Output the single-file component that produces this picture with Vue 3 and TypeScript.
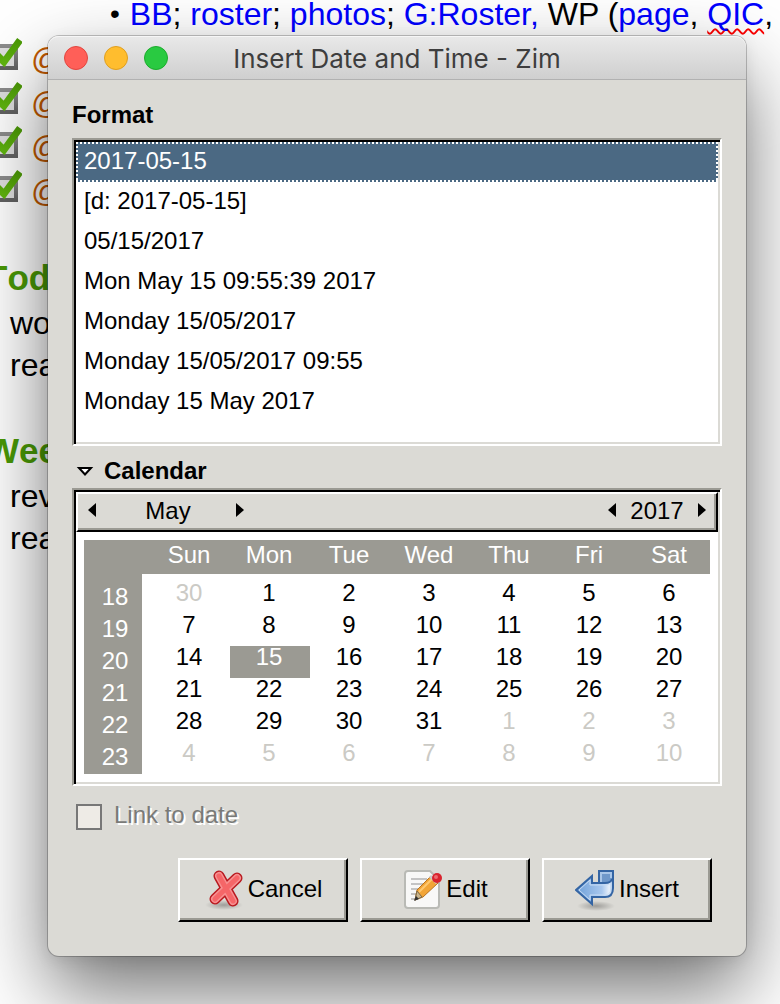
<script setup lang="ts">
import { computed, ref } from 'vue'

interface Day {
  n: number
  other: boolean
}

const formats: string[] = [
  '2017-05-15',
  '[d: 2017-05-15]',
  '05/15/2017',
  'Mon May 15 09:55:39 2017',
  'Monday 15/05/2017',
  'Monday 15/05/2017 09:55',
  'Monday 15 May 2017',
]
const weekdays: string[] = ['Sun', 'Mon', 'Tue', 'Wed', 'Thu', 'Fri', 'Sat']

const selectedFormat = ref(0)
const selectedDay = ref(15)
const open = ref(true)

const weeks = computed(() =>
  Array.from({ length: 6 }, (_, w) => ({
    number: 18 + w,
    days: Array.from({ length: 7 }, (_, d): Day => {
      const i = w * 7 + d
      if (i === 0) return { n: 30, other: true }
      return i > 31 ? { n: i - 31, other: true } : { n: i, other: false }
    }),
  })),
)

function pick(day: Day) {
  if (!day.other) selectedDay.value = day.n
}
</script>

<template>
  <div class="desktop">
    <article class="note">
      <p class="top-line">
        <span class="bullet">•</span>
        <span><a href="#">BB</a>; <a href="#">roster</a>; <a href="#">photos</a>; <a href="#">G:Roster,</a> WP (<a href="#">page</a>, <a href="#" class="misspelt">QIC</a>,</span>
      </p>
      <ul class="tasks">
        <li v-for="i in 4" :key="i">
          <svg width="34" height="36" viewBox="0 0 34 36" aria-hidden="true">
            <defs>
              <linearGradient id="box-edge" x2="0" y2="1">
                <stop offset="0" stop-color="#8c8c8c" />
                <stop offset="1" stop-color="#626262" />
              </linearGradient>
              <linearGradient id="tick-fill" x2="0" y2="1">
                <stop offset="0" stop-color="#4c9a06" />
                <stop offset="1" stop-color="#5fb40f" />
              </linearGradient>
            </defs>
            <rect x="6" y="9" width="22" height="22" fill="#dedede" stroke="url(#box-edge)" stroke-width="4" />
            <path d="M7 16 L16 25 L32 3" fill="none" stroke="url(#tick-fill)" stroke-width="7" />
          </svg>
          <span>@</span>
        </li>
      </ul>
      <h2>Tod</h2>
      <p class="line">wo</p>
      <p class="line">rea</p>
      <h2>Wee</h2>
      <p class="line">rev</p>
      <p class="line">rea</p>
    </article>

    <section class="dialog" role="dialog" aria-labelledby="dialog-title">
      <header class="titlebar">
        <div class="lights">
          <button type="button" class="light close" aria-label="Close"></button>
          <button type="button" class="light minimise" aria-label="Minimise"></button>
          <button type="button" class="light zoom" aria-label="Zoom"></button>
        </div>
        <h1 id="dialog-title">Insert Date and Time - Zim</h1>
      </header>

      <div class="body">
        <h3 id="format-label" class="label">Format</h3>
        <div class="frame formats" role="listbox" aria-labelledby="format-label">
          <button
            v-for="(f, i) in formats"
            :key="f"
            type="button"
            role="option"
            class="format"
            :class="{ selected: i === selectedFormat }"
            :aria-selected="i === selectedFormat"
            @click="selectedFormat = i"
          >{{ f }}</button>
        </div>

        <button type="button" class="expander" :aria-expanded="open" @click="open = !open">
          <svg width="18" height="14" viewBox="0 0 18 14" aria-hidden="true">
            <path d="M3 4 H15 L9 10.500 Z" fill="#fff" stroke="#000" stroke-width="2" />
          </svg>
          Calendar
        </button>

        <div v-if="open" class="frame">
          <div class="nav">
            <button type="button" class="arrow" aria-label="Previous month">
              <svg width="8" height="14" viewBox="0 0 8 14"><path d="M8 0 V14 L0 7 Z" /></svg>
            </button>
            <span class="month">May</span>
            <button type="button" class="arrow" aria-label="Next month">
              <svg width="8" height="14" viewBox="0 0 8 14"><path d="M0 0 V14 L8 7 Z" /></svg>
            </button>
            <span class="spring"></span>
            <button type="button" class="arrow" aria-label="Previous year">
              <svg width="8" height="14" viewBox="0 0 8 14"><path d="M8 0 V14 L0 7 Z" /></svg>
            </button>
            <span class="year">2017</span>
            <button type="button" class="arrow" aria-label="Next year">
              <svg width="8" height="14" viewBox="0 0 8 14"><path d="M0 0 V14 L8 7 Z" /></svg>
            </button>
          </div>
          <div class="month-grid">
            <table>
              <thead>
                <tr>
                  <td class="corner"></td>
                  <th v-for="d in weekdays" :key="d" scope="col">{{ d }}</th>
                </tr>
              </thead>
              <tbody>
                <tr v-for="w in weeks" :key="w.number">
                  <th scope="row">{{ w.number }}</th>
                  <td v-for="(day, i) in w.days" :key="i">
                    <button
                      type="button"
                      class="day"
                      :class="{ other: day.other, chosen: !day.other && day.n === selectedDay }"
                      @click="pick(day)"
                    >{{ day.n }}</button>
                  </td>
                </tr>
              </tbody>
            </table>
          </div>
        </div>

        <label class="link-row">
          <input type="checkbox" disabled />
          <span>Link to date</span>
        </label>

        <footer class="actions">
          <button type="button" class="action">
            <svg width="40" height="44" viewBox="0 0 40 44" aria-hidden="true">
              <defs>
                <radialGradient id="soft">
                  <stop offset="0" stop-color="#000" stop-opacity=".28" />
                  <stop offset="1" stop-color="#000" stop-opacity="0" />
                </radialGradient>
              </defs>
              <ellipse cx="20" cy="38" rx="19" ry="5" fill="url(#soft)" />
              <g fill="none" stroke-linecap="round" stroke-linejoin="round">
                <path d="M15 9 L29 34 M33 11 L11 32" stroke="#b8191f" stroke-width="11" />
                <path d="M15 9 L29 34 M33 11 L11 32" stroke="#f78f90" stroke-width="8" />
                <path d="M15 9 L29 34 M33 11 L11 32" stroke="#f56668" stroke-width="5" />
              </g>
            </svg>
            Cancel
          </button>
          <button type="button" class="action">
            <svg width="40" height="44" viewBox="0 0 40 44" aria-hidden="true">
              <path d="M6 4 H28 L37 13 V38 Q37 41 34 41 H6 Q3 41 3 38 V7 Q3 4 6 4 Z" fill="#f8f8f7" stroke="#b9bab5" stroke-width="2" />
              <path d="M9 12 H25 M9 17 H22 M9 22 H20 M9 27 H17 M9 32 H14" stroke="#c4c4c4" stroke-width="2" />
              <path d="M29 9 L36 16 L21 30 L13 33 L15 23 Z" fill="#f2a537" stroke="#b97320" stroke-width="1" />
              <path d="M30 12 L17 25" stroke="#ffc970" stroke-width="2" />
              <path d="M15 24 L20 30 L13 33 Z" fill="#c9b48c" stroke="#7c6a48" stroke-width="1" />
              <path d="M14 29 L17 32 L12 34 Z" fill="#333" />
              <path d="M28 9 L35 16" stroke="#c9c9c9" stroke-width="3" />
              <circle cx="35" cy="11" r="5" fill="#d9232e" />
              <circle cx="34" cy="10" r="2" fill="#ee6a70" />
            </svg>
            Edit
          </button>
          <button type="button" class="action">
            <svg width="40" height="44" viewBox="0 0 40 44" aria-hidden="true">
              <defs>
                <linearGradient id="ret" x1="0" x2="1">
                  <stop offset="0" stop-color="#6d9fd8" />
                  <stop offset=".7" stop-color="#a9c8ee" />
                  <stop offset=".9" stop-color="#e8f0fa" />
                  <stop offset="1" stop-color="#8fb4e0" />
                </linearGradient>
              </defs>
              <ellipse cx="21" cy="39" rx="19" ry="5" fill="url(#soft)" />
              <path d="M24 4 H38 V21 Q38 30 30 30 H17 V37 L1 23 L17 9 V16 H24 Z" fill="url(#ret)" stroke="#3465a4" stroke-width="2" />
              <path d="M25 5 H37 V13 Q34 16 30 16 H25 Z" fill="#6f98ca" />
              <path d="M24 16 H30 Q36 16 37 12" fill="none" stroke="#3465a4" stroke-width="2" />
              <path d="M26 15 V6 H36 V11" fill="none" stroke="#a9c6e8" stroke-width="2" />
              <path d="M15 13 V18 H30 Q34 18 36 16 V21 Q36 28 30 28 H15 V33 L4 23 Z" fill="none" stroke="#c8dcf4" stroke-width="1" />
            </svg>
            Insert
          </button>
        </footer>
      </div>
    </section>
  </div>
</template>

<style>
body {
  margin: 0;
  background: #fff;
}
</style>

<style scoped>
* {
  box-sizing: border-box;
}

.desktop {
  display: grid;
  min-height: 100vh;
  overflow: hidden;
  align-items: start;
  font-family: "Liberation Sans", Arial, sans-serif;
  color: #000;
}

.note,
.dialog {
  grid-area: 1 / 1;
  min-width: 0;
}

button {
  margin: 0;
  padding: 0;
  border: 0;
  background: none;
  font: inherit;
  color: inherit;
}

/* Page behind the dialog */
.note {
  margin-left: -14px;
  font-size: 32px;
  white-space: nowrap;
}

.note p,
.note h2,
.tasks {
  margin: 0;
  padding: 0;
}

.note a {
  color: #00f;
  text-decoration: none;
}

.note .top-line {
  display: flex;
  gap: 10px;
  padding-left: 124px;
  line-height: 28px;
}

.bullet {
  font-size: 28px;
}

.note .misspelt {
  text-decoration: underline wavy #f00 2px;
  text-underline-offset: 3px;
  text-decoration-skip-ink: none;
}

.note .tasks {
  margin-top: 9px;
  padding-left: 2px;
  list-style: none;
  line-height: 44px;
  color: #c25a00;
}

.tasks li {
  display: flex;
  align-items: flex-start;
  gap: 9px;
}

.note h2 {
  margin: 43px 0 2px;
  font-size: 35px;
  line-height: 44px;
  font-kerning: none;
  color: #4a9a06;
}

.note .line {
  padding-left: 24px;
  line-height: 42px;
}

/* Window */
.dialog {
  position: relative;
  margin: 36px 34px 48px 48px;
  border-radius: 11px;
  background: #dbdad5;
  font-size: 24px;
  box-shadow:
    0 0 0 1px rgba(0, 0, 0, 0.22),
    0 4px 16px rgba(0, 0, 0, 0.08),
    0 36px 80px rgba(0, 0, 0, 0.55);
}

.titlebar {
  display: grid;
  grid-template-columns: 1fr auto 1fr;
  align-items: center;
  height: 44px;
  padding: 0 16px;
  border-bottom: 1px solid #b1b1b1;
  border-radius: 11px 11px 0 0;
  background: linear-gradient(#e9e9e9, #cfcfcf);
  box-shadow: inset 0 1px #f6f6f6;
}

.titlebar h1 {
  margin: 0;
  padding-top: 2px;
  font: 400 26px/32px Inter, sans-serif;
  color: #3e3e3e;
}

.lights {
  display: flex;
  gap: 16px;
}

.light {
  width: 24px;
  height: 24px;
  border-radius: 50%;
  border: 1px solid;
}

.close {
  background: #ff5f58;
  border-color: #e2463f;
}

.minimise {
  background: #ffbd2e;
  border-color: #e09f1f;
}

.zoom {
  background: #29ca41;
  border-color: #1bac2c;
}

.body {
  padding: 21px 24px 34px;
}

.label {
  margin: 0 0 9px;
  font-size: 24px;
  line-height: 28px;
}

.frame {
  border: 2px solid;
  border-color: #9b9a93 #fff #fff #9b9a93;
  background: #fff;
  box-shadow: inset 2px 2px #000, inset -2px -2px #dbdad5;
  padding: 2px;
}

.formats {
  padding-bottom: 22px;
}

.format {
  display: block;
  width: 100%;
  height: 40px;
  padding: 0 8px 2px;
  line-height: 36px;
  text-align: left;
}

.format.selected {
  color: #fff;
  background:
    repeating-linear-gradient(90deg, #fff 0 2px, #4b6983 2px 4px) top / 100% 2px no-repeat,
    repeating-linear-gradient(90deg, #fff 0 2px, #4b6983 2px 4px) bottom / 100% 2px no-repeat,
    repeating-linear-gradient(#fff 0 2px, #4b6983 2px 4px) left / 2px 100% no-repeat,
    repeating-linear-gradient(#fff 0 2px, #4b6983 2px 4px) right / 2px 100% no-repeat,
    #4b6983;
}

.expander {
  display: flex;
  align-items: center;
  gap: 10px;
  margin: 11px 0 3px;
  padding-left: 4px;
  font-weight: 700;
  line-height: 28px;
}

.nav {
  display: flex;
  align-items: center;
  height: 40px;
  padding: 0 10px 2px;
  border: 2px solid;
  border-color: #fff #000 #000 #fff;
  background: #dbdad5;
  box-shadow: inset -2px -2px #9b9a93;
  line-height: 34px;
}

.arrow {
  display: flex;
  flex: none;
  padding-bottom: 2px;
}

.month {
  width: 140px;
  padding-left: 4px;
  text-align: center;
}

.spring {
  flex: 1;
}

.year {
  width: 82px;
  text-align: center;
}

.month-grid {
  padding: 8px;
}

table {
  width: 100%;
  table-layout: fixed;
  border-spacing: 0;
}

th,
td {
  padding: 0;
  font-weight: 400;
  text-align: center;
  vertical-align: top;
}

.corner {
  width: 66px;
}

thead th,
.corner {
  height: 34px;
  padding-right: 2px;
  background: #9b9a93;
  color: #fff;
  line-height: 30px;
}

tbody th {
  padding-left: 4px;
  border-right: 8px solid #fff;
  background: #9b9a93;
  color: #fff;
  line-height: 30px;
}

tbody tr:first-child > * {
  padding-top: 8px;
}

.day {
  display: block;
  width: 100%;
  height: 32px;
  padding: 0 2px 10px 0;
  line-height: 22px;
}

.day.other {
  color: #cbcac5;
}

.day.chosen {
  background: #9b9a93;
  color: #fff;
}

.link-row {
  display: flex;
  align-items: flex-start;
  gap: 12px;
  margin: 18px 0 28px;
  padding-left: 4px;
  line-height: 22px;
  color: #7a7a78;
  text-shadow: 2px 2px #fff;
}

.link-row input {
  appearance: none;
  width: 26px;
  height: 26px;
  margin: 0;
  border: 2px solid #777;
  background: #eeebe6;
}

.actions {
  display: flex;
  justify-content: flex-end;
  gap: 12px;
  padding-right: 10px;
}

.action {
  display: flex;
  align-items: center;
  justify-content: center;
  gap: 4px;
  width: 170px;
  height: 64px;
  padding-bottom: 2px;
  border: 2px solid;
  border-color: #fff #000 #000 #fff;
  box-shadow: inset -2px -2px #9b9a93;
}
</style>
